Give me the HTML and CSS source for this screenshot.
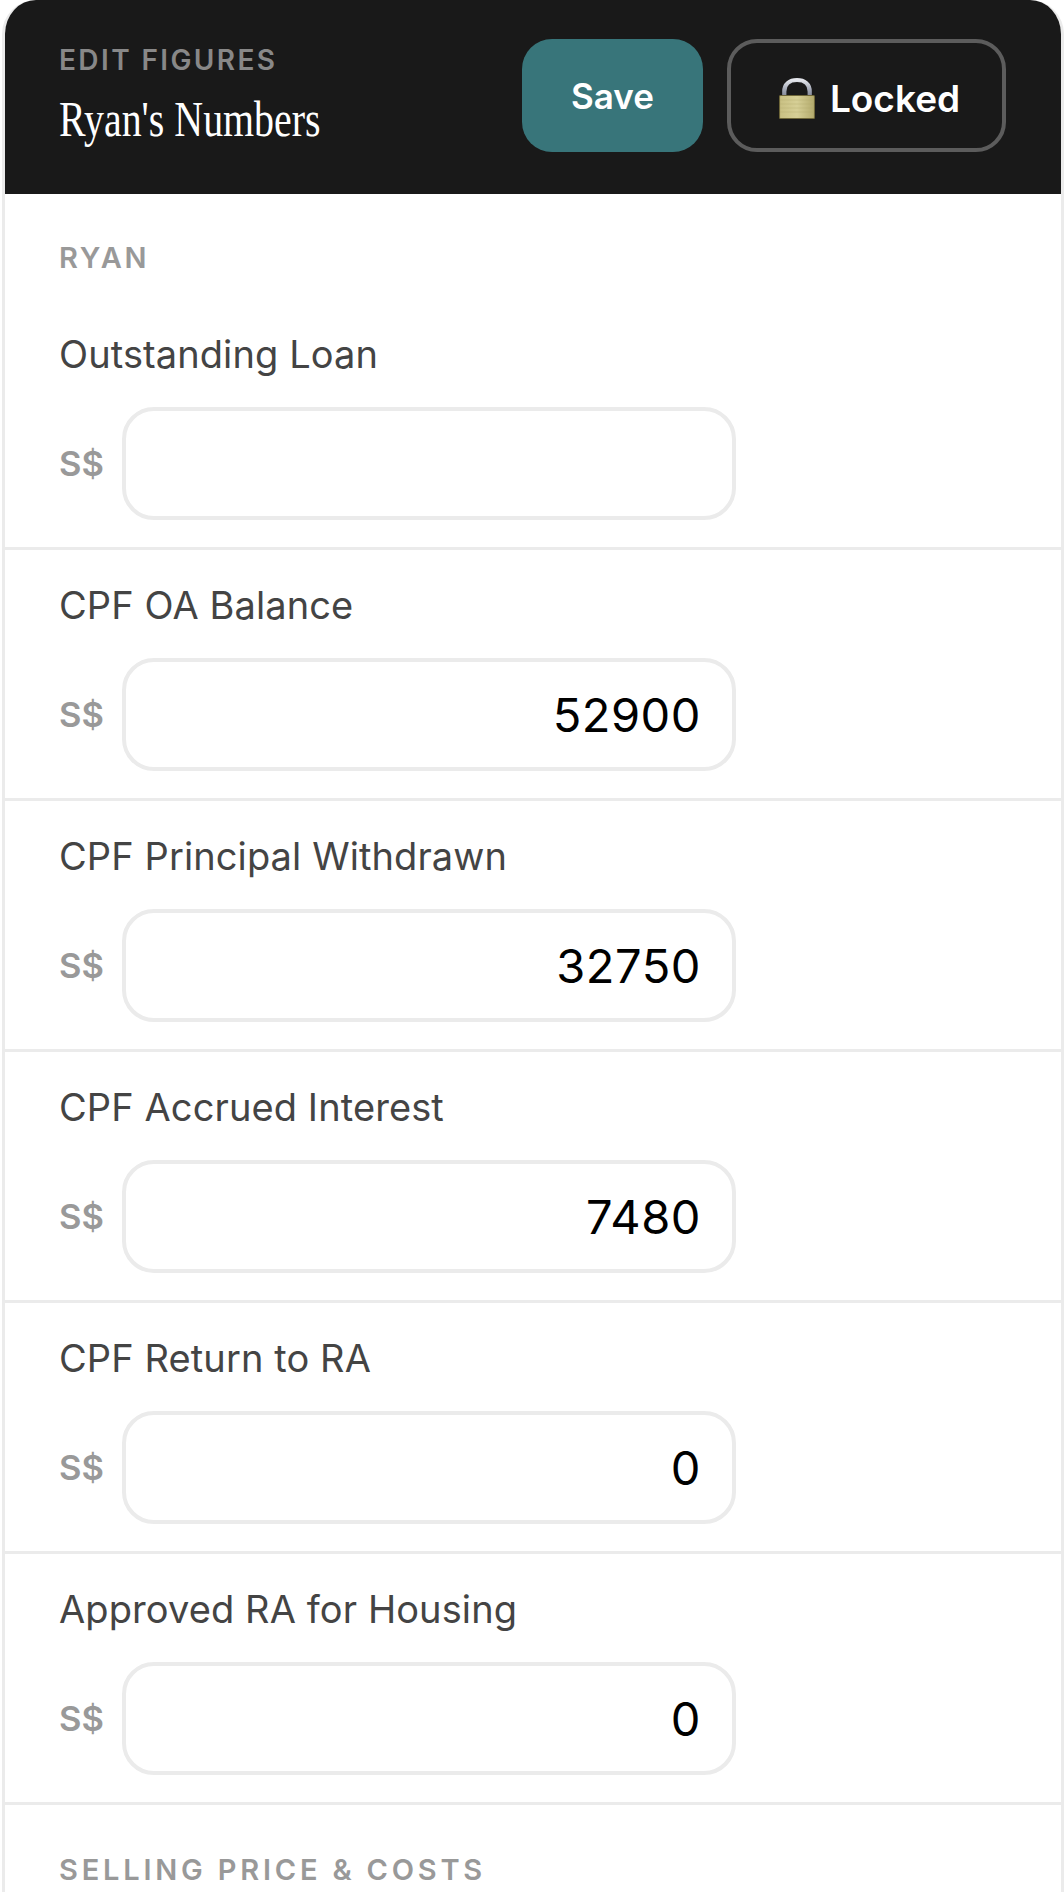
FILE: index.html
```html
<!DOCTYPE html>
<html>

<head>
    <meta charset="utf-8">
    <title>Ryan's Numbers</title>
    <link rel="stylesheet" href="styles.css">
</head>

<body>
    <div class="card">
        <div class="card-head">
            <div class="head-text">
                <div class="eyebrow">EDIT FIGURES</div>
                <div class="title"><span>Ryan's Numbers</span></div>
            </div>
            <div class="head-actions">
                <button class="btn btn-save">Save</button>
                <button class="btn btn-lock">
                    <svg class="lock-icon" width="36" height="41" viewBox="0 0 34 41" preserveAspectRatio="none">
                        <defs>
                            <linearGradient id="shackle" x1="0" y1="0" x2="0" y2="1">
                                <stop offset="0" stop-color="#e4e6ec" />
                                <stop offset="0.5" stop-color="#a9aebb" />
                                <stop offset="1" stop-color="#7f8494" />
                            </linearGradient>
                            <linearGradient id="lockBody" x1="0" y1="0" x2="1" y2="0">
                                <stop offset="0" stop-color="#c9c083" />
                                <stop offset="0.5" stop-color="#d6cf96" />
                                <stop offset="1" stop-color="#b3aa6c" />
                            </linearGradient>
                        </defs>
                        <path d="M5 19V13.5C5 6 10 2 17 2s12 4 12 11.5V19" fill="none" stroke="url(#shackle)" stroke-width="4" />
                        <rect x="0.5" y="17.5" width="33" height="23" rx="1" fill="url(#lockBody)" stroke="#6f6739" />
                        <path d="M1 22h32M1 26h32M1 30h32M1 34h32" stroke="#b2a96c" stroke-width="1" opacity="0.35" />
                    </svg>
                    <span>Locked</span>
                </button>
            </div>
        </div>

        <div class="section-title">RYAN</div>
        <div class="field">
            <label class="field-label">Outstanding Loan</label>
            <div class="field-row">
                <span class="currency">S$</span>
                <input class="amount" type="text" value="">
            </div>
        </div>
        <div class="field">
            <label class="field-label">CPF OA Balance</label>
            <div class="field-row">
                <span class="currency">S$</span>
                <input class="amount" type="text" value="52900">
            </div>
        </div>
        <div class="field">
            <label class="field-label">CPF Principal Withdrawn</label>
            <div class="field-row">
                <span class="currency">S$</span>
                <input class="amount" type="text" value="32750">
            </div>
        </div>
        <div class="field">
            <label class="field-label">CPF Accrued Interest</label>
            <div class="field-row">
                <span class="currency">S$</span>
                <input class="amount" type="text" value="7480">
            </div>
        </div>
        <div class="field">
            <label class="field-label">CPF Return to RA</label>
            <div class="field-row">
                <span class="currency">S$</span>
                <input class="amount" type="text" value="0">
            </div>
        </div>
        <div class="field">
            <label class="field-label">Approved RA for Housing</label>
            <div class="field-row">
                <span class="currency">S$</span>
                <input class="amount" type="text" value="0">
            </div>
        </div>

        <div class="section-title section-next">SELLING PRICE &amp; COSTS</div>
    </div>
</body>

</html>
```
FILE: styles.css
```css
html,
body {
    height: 1892px;
    overflow: hidden;
}

body {
    margin: 0;
    background: #fff;
    font-family: Inter, "Liberation Sans", sans-serif;
}

.card {
    margin-left: 2px;
    border: 3px solid #ebebeb;
    border-top: 0;
    border-radius: 34px 34px 0 0;
    overflow: hidden;
    background: #fff;
}

.card-head {
    display: flex;
    justify-content: space-between;
    height: 194px;
    box-sizing: border-box;
    padding: 39px 55px 0 54px;
    background: #191919;
}

.eyebrow {
    margin-top: 3px;
    font-size: 28px;
    line-height: 36px;
    font-weight: 600;
    letter-spacing: 2.4px;
    color: #888;
}

.title {
    margin-top: 13px;
    font-family: "Liberation Serif", serif;
    font-size: 50px;
    line-height: 56px;
    color: #fff;
    white-space: nowrap;
}

.title span {
    display: inline-block;
    transform: scaleX(0.798);
    transform-origin: left center;
}

.head-actions {
    display: flex;
    gap: 24px;
}

.btn {
    display: flex;
    align-items: center;
    justify-content: center;
    height: 113px;
    box-sizing: border-box;
    border-radius: 30px;
    font-family: inherit;
    font-size: 35px;
    font-weight: 600;
    color: #fff;
}

.btn-save {
    width: 181px;
    border: 0;
    background: #38757a;
}

.btn-lock {
    width: 279px;
    gap: 15px;
    padding: 0 0 0 6px;
    border: 4px solid #5c5c5c;
    background: transparent;
    font-size: 37px;
}

.btn-lock span {
    padding-top: 5px;
}

.lock-icon {
    margin-top: 5px;
}

.section-title {
    padding: 46px 54px 23px;
    font-size: 29px;
    line-height: 36px;
    font-weight: 600;
    letter-spacing: 2.6px;
    color: #999;
}

.section-next {
    padding-top: 47px;
    letter-spacing: 3.8px;
}

.field {
    padding: 32px 54px 27px;
    border-bottom: 3px solid #ebebeb;
}

.field-label {
    display: block;
    margin-bottom: 30px;
    font-size: 38px;
    line-height: 46px;
    letter-spacing: 0.1px;
    color: #444;
}

.field-row {
    display: flex;
    align-items: center;
    gap: 18px;
}

.currency {
    font-size: 34.5px;
    font-weight: 600;
    color: #999;
}

.amount {
    display: block;
    width: 614px;
    height: 113px;
    box-sizing: border-box;
    padding: 0 31px;
    border: 4px solid #ebebeb;
    border-radius: 32px;
    outline: 0;
    background: #fff;
    font-family: inherit;
    font-size: 47px;
    letter-spacing: 0.5px;
    text-align: right;
    color: #000;
}
```
